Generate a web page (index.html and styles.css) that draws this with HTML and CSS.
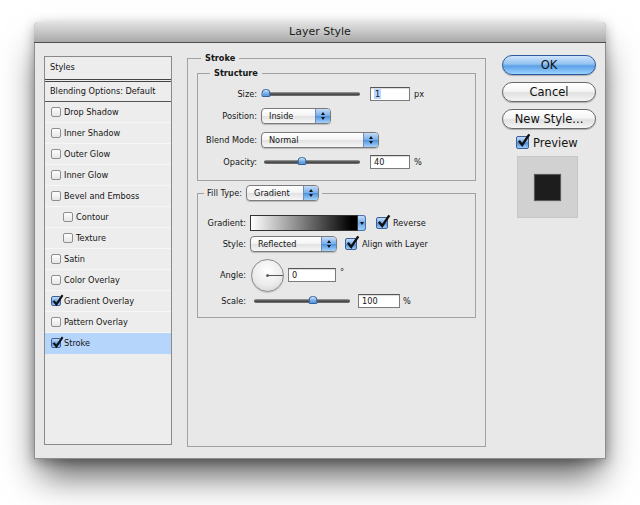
FILE: index.html
```html
<!DOCTYPE html>
<html>
<head>
<meta charset="utf-8">
<title>Layer Style</title>
<link rel="stylesheet" href="styles.css">
</head>
<body>
<div class="window">
  <div class="titlebar">Layer Style</div>
  <div class="content">
    <div class="stylelist">
      <div class="list-head">Styles</div>
      <div class="list-blend">Blending Options: Default</div>
      <div class="item"><span class="cb"></span>Drop Shadow</div>
      <div class="item"><span class="cb"></span>Inner Shadow</div>
      <div class="item"><span class="cb"></span>Outer Glow</div>
      <div class="item"><span class="cb"></span>Inner Glow</div>
      <div class="item"><span class="cb"></span>Bevel and Emboss</div>
      <div class="item sub"><span class="cb"></span>Contour</div>
      <div class="item sub"><span class="cb"></span>Texture</div>
      <div class="item"><span class="cb"></span>Satin</div>
      <div class="item"><span class="cb"></span>Color Overlay</div>
      <div class="item"><span class="cb on"><svg class="tick" viewBox="0 0 12 13" width="12" height="13"><path d="M1.6 6.8 L4.4 10.4 L10.6 1.2" fill="none" stroke="#111" stroke-width="2.1"/></svg></span>Gradient Overlay</div>
      <div class="item"><span class="cb"></span>Pattern Overlay</div>
      <div class="item sel"><span class="cb on"><svg class="tick" viewBox="0 0 12 13" width="12" height="13"><path d="M1.6 6.8 L4.4 10.4 L10.6 1.2" fill="none" stroke="#111" stroke-width="2.1"/></svg></span>Stroke</div>
    </div>

    <fieldset class="stroke">
      <legend class="bold">Stroke</legend>
      <fieldset class="group structure">
        <legend class="bold">Structure</legend>
        <div class="row">
          <span class="lbl">Size:</span>
          <div class="slider"><div class="track"></div><div class="thumb" style="left:2%"></div></div>
          <span class="field w40"><span class="hl">1</span></span>
          <span class="unit">px</span>
        </div>
        <div class="row">
          <span class="lbl">Position:</span>
          <div class="select w-pos"><span class="sel-text">Inside</span><span class="step"><i class="up"></i><i class="dn"></i></span></div>
        </div>
        <div class="row r-blend">
          <span class="lbl">Blend Mode:</span>
          <div class="select w-blend"><span class="sel-text">Normal</span><span class="step"><i class="up"></i><i class="dn"></i></span></div>
        </div>
        <div class="row">
          <span class="lbl">Opacity:</span>
          <div class="slider"><div class="track"></div><div class="thumb" style="left:40%"></div></div>
          <span class="field w40">40</span>
          <span class="unit">%</span>
        </div>
      </fieldset>

      <fieldset class="group fill">
        <legend class="fill-legend"><span class="fill-lbl">Fill Type:</span><div class="select w-fill"><span class="sel-text">Gradient</span><span class="step"><i class="up"></i><i class="dn"></i></span></div></legend>
        <div class="frow r-grad">
          <span class="flbl">Gradient:</span>
          <div class="gradbox"></div>
          <div class="gradarrow"><i class="dn"></i></div>
          <span class="bigcb on r-gap"><svg class="tick" viewBox="0 0 12 13" width="14" height="15"><path d="M1.6 6.8 L4.4 10.4 L10.6 1.2" fill="none" stroke="#111" stroke-width="2.1"/></svg></span>
          <span class="cbtext">Reverse</span>
        </div>
        <div class="frow r-style">
          <span class="flbl">Style:</span>
          <div class="select w-style"><span class="sel-text">Reflected</span><span class="step"><i class="up"></i><i class="dn"></i></span></div>
          <span class="bigcb on a-gap"><svg class="tick" viewBox="0 0 12 13" width="14" height="15"><path d="M1.6 6.8 L4.4 10.4 L10.6 1.2" fill="none" stroke="#111" stroke-width="2.1"/></svg></span>
          <span class="cbtext">Align with Layer</span>
        </div>
        <div class="frow r-angle">
          <span class="flbl">Angle:</span>
          <div class="dial"></div>
          <span class="field w48">0</span>
          <span class="deg">°</span>
        </div>
        <div class="frow r-scale">
          <span class="flbl">Scale:</span>
          <div class="slider s-scale"><div class="track"></div><div class="thumb" style="left:61%"></div></div>
          <span class="field w42">100</span>
          <span class="unit u3">%</span>
        </div>
      </fieldset>
    </fieldset>

    <div class="actions">
      <div class="btn default">OK</div>
      <div class="btn">Cancel</div>
      <div class="btn">New Style...</div>
      <div class="preview-row"><span class="bigcb on"><svg class="tick" viewBox="0 0 12 13" width="14" height="15"><path d="M1.6 6.8 L4.4 10.4 L10.6 1.2" fill="none" stroke="#111" stroke-width="2.1"/></svg></span><span class="pv-text">Preview</span></div>
      <div class="preview-box"><div class="swatch"></div></div>
    </div>
  </div>
</div>
</body>
</html>
```

FILE: styles.css
```css
* { box-sizing: border-box; }
html { background: #fff; }
body {
  margin: 0;
  min-height: 505px;
  padding-top: 22px;
  background: #fff;
  font-family: "DejaVu Sans", sans-serif;
  font-size: 8.2px;
  color: #151515;
}
.window {
  margin: 0 0 0 34px;
  width: 572px;
  height: 437px;
  background: #e8e8e8;
  border: 1px solid #8d8d8d;
  border-top: none;
  border-radius: 5px 5px 0 0;
  box-shadow: 0 22px 34px -6px rgba(0,0,0,0.65), 0 3px 12px rgba(0,0,0,0.3);
  display: flex;
  flex-direction: column;
}
.titlebar {
  flex: none;
  height: 21px;
  margin: 0 -1px;
  border-bottom: 1px solid #4e4e4e;
  border-radius: 5px 5px 0 0;
  background: linear-gradient(#e2e2e2, #c6c6c6 50%, #a9a9a9);
  text-align: center;
  font-size: 11px;
  line-height: 20px;
  color: #1c1c1c;
}
.content {
  display: flex;
  align-items: flex-start;
  padding: 13px 9px 0 9px;
}

/* left style list */
.stylelist {
  flex: none;
  width: 128px;
  height: 389px;
  border: 1px solid #8a8a8a;
  background: #ededed;
}
.list-head {
  height: 25px;
  line-height: 21px;
  padding-left: 5px;
  border-bottom: 3px double #444;
}
.list-blend {
  height: 20px;
  line-height: 19px;
  padding-left: 5px;
  border-bottom: 1px solid #555;
}
.item {
  height: 21px;
  display: flex;
  align-items: center;
  padding-left: 6px;
  border-bottom: 1px solid #f6f6f6;
}
.item.sub { padding-left: 18px; }
.item.sel { background: #b6d5fb; border-bottom-color: #b6d5fb; }
.cb {
  position: relative;
  flex: none;
  width: 10px;
  height: 10px;
  margin-right: 3px;
  border: 1px solid #8e8e8e;
  border-radius: 2px;
  background: linear-gradient(#fdfdfd, #e6e6e6);
}
.cb.on, .bigcb.on {
  border-color: #3b5f95;
  background: linear-gradient(#c4ddf8, #78aeea 48%, #4a8ddc 52%, #9ccbf6);
}
.tick { position: absolute; left: 0; top: -3px; }
.bigcb {
  position: relative;
  flex: none;
  width: 12px;
  height: 12px;
  border: 1px solid #3b5f95;
  border-radius: 2px;
}
.bigcb .tick { left: 0; top: -4px; }

/* middle */
.bold { font-weight: bold; }
fieldset {
  margin: 0;
  min-width: 0;
  border: 1px solid #a2a2a2;
}
legend { line-height: 10px; }
.stroke {
  flex: none;
  width: 299px;
  height: 394px;
  margin: -3px 0 0 15px;
  padding: 5px 9px 0 9px;
}
.stroke > legend { margin-left: 4px; padding: 0 4px; }
.group { padding: 0; }
.structure { padding: 5px 0 7px 0; }
.structure > legend { margin-left: 12px; padding: 0 4px; }
.row {
  display: flex;
  align-items: center;
  height: 22px;
}
.r-blend { margin-top: 2px; }
.lbl {
  flex: none;
  width: 59px;
  text-align: right;
  margin-right: 4px;
}
.slider {
  position: relative;
  flex: none;
  width: 96px;
  height: 12px;
  margin-left: 3px;
  display: flex;
  align-items: center;
}
.track {
  width: 100%;
  height: 4px;
  border-radius: 2px;
  background: linear-gradient(#a5a5a5, #3e3e3e 55%, #7d7d7d);
}
.thumb {
  position: absolute;
  top: 1px;
  width: 9px;
  height: 8px;
  transform: translateX(-50%);
  border: 1px solid #35609b;
  border-radius: 4px 4px 1px 1px;
  background: linear-gradient(#d2e6fb, #7db3ec 50%, #5496e0);
}
.field {
  flex: none;
  height: 14px;
  border: 1px solid #7b7b7b;
  border-top-color: #555;
  background: #fff;
  padding-left: 3px;
  line-height: 12px;
  box-shadow: inset 0 1px 1px rgba(0,0,0,0.15);
}
.w40 { width: 40px; margin-left: 10px; }
.w48 { width: 48px; margin-left: 4px; }
.w42 { width: 42px; margin-left: 8px; }
.hl { background: #b5d5ff; padding: 0 1px; }
.unit { margin-left: 4px; }
.u3 { margin-left: 3px; }
.deg { margin-left: 4px; align-self: flex-start; margin-top: 12px; }

.select {
  flex: none;
  display: flex;
  height: 16px;
  border: 1px solid #7a7a7a;
  border-radius: 4px;
  overflow: hidden;
  background: linear-gradient(#ffffff, #f4f4f4 48%, #e2e2e2 52%, #f7f7f7);
  box-shadow: 0 1px 1px rgba(0,0,0,0.2);
}
.sel-text { flex: 1; padding-left: 7px; line-height: 14px; }
.step {
  flex: none;
  width: 15px;
  border-left: 1px solid #6b8cbd;
  background: linear-gradient(#c3dcf8, #79aee9 48%, #4f92de 52%, #a5d2fa);
  display: flex;
  flex-direction: column;
  align-items: center;
  justify-content: center;
  gap: 2px;
}
.up, .dn { display: block; width: 0; height: 0; border-left: 2.5px solid transparent; border-right: 2.5px solid transparent; }
.up { border-bottom: 3px solid #111; }
.dn { border-top: 3px solid #111; }
.w-pos { width: 70px; }
.w-blend { width: 118px; }
.w-fill { width: 73px; }
.w-style { width: 87px; }

.fill { margin-top: 4px; height: 133px; padding: 12px 0 0 0; }
.fill-legend {
  display: flex;
  align-items: center;
  margin-left: 6px;
  padding: 0 3px;
  line-height: 16px;
}
.fill-lbl { margin-right: 4px; }
.frow { display: flex; align-items: center; }
.r-grad { height: 20px; }
.r-style { height: 22px; }
.r-angle { height: 40px; }
.r-scale { height: 12px; }
.flbl {
  flex: none;
  width: 48px;
  text-align: right;
  margin-right: 4px;
}
.gradbox {
  flex: none;
  width: 108px;
  height: 16px;
  border: 1px solid #333;
  background: linear-gradient(to right, #fff, #888 45%, #000 95%);
}
.gradarrow {
  flex: none;
  width: 8px;
  height: 16px;
  border: 1px solid #4d72a8;
  border-left: none;
  border-radius: 0 3px 3px 0;
  background: linear-gradient(#c3dcf8, #6fa8e8 50%, #9fcdf8);
  display: flex;
  align-items: center;
  justify-content: center;
}
.gradarrow .dn { border-left-width: 2px; border-right-width: 2px; border-top-width: 3px; }
.r-gap { margin-left: 10px; }
.a-gap { margin-left: 8px; }
.cbtext { margin-left: 5px; }
.dial {
  position: relative;
  flex: none;
  width: 33px;
  height: 33px;
  margin-left: 1px;
  border-radius: 50%;
  border: 1px solid #8a8a8a;
  background: radial-gradient(circle at 50% 35%, #ffffff, #ececec 55%, #cfcfcf);
  box-shadow: 0 1px 1px rgba(0,0,0,0.15);
}
.dial::after {
  content: "";
  position: absolute;
  left: 15px;
  top: 15px;
  width: 16px;
  height: 1px;
  background: #555;
}
.dial::before {
  content: "";
  position: absolute;
  left: 14px;
  top: 14px;
  width: 3px;
  height: 3px;
  border-radius: 50%;
  background: #666;
}
.s-scale { margin-left: 4px; }

/* right column */
.actions {
  flex: none;
  width: 94px;
  margin: -1px 0 0 16px;
  display: flex;
  flex-direction: column;
}
.btn {
  height: 20px;
  margin-bottom: 7px;
  border: 1px solid #6a6a6a;
  border-radius: 10px;
  background: linear-gradient(#ffffff, #f5f5f5 45%, #e1e1e1 55%, #f4f4f4);
  box-shadow: 0 1px 1px rgba(0,0,0,0.25);
  font-size: 11.5px;
  line-height: 18px;
  text-align: center;
  color: #111;
}
.btn.default {
  border-color: #2d5a9e;
  background: linear-gradient(#cfe5fc, #93c2f1 45%, #5c9fe6 55%, #9ad3ff);
}
.preview-row {
  display: flex;
  align-items: center;
  height: 13px;
  padding-left: 14px;
}
.preview-row .bigcb { width: 13px; height: 13px; }
.pv-text { margin-left: 4px; font-size: 11.5px; }
.preview-box {
  width: 61px;
  height: 62px;
  margin: 7px 0 0 15px;
  background: #d1d1d1;
  border: 1px solid #c6c6c6;
  display: flex;
  align-items: center;
  justify-content: center;
}
.swatch {
  width: 27px;
  height: 27px;
  background: #1d1d1d;
  border: 1px solid #5a5a5a;
  box-shadow: 0 0 1px rgba(0,0,0,0.4);
}
```
